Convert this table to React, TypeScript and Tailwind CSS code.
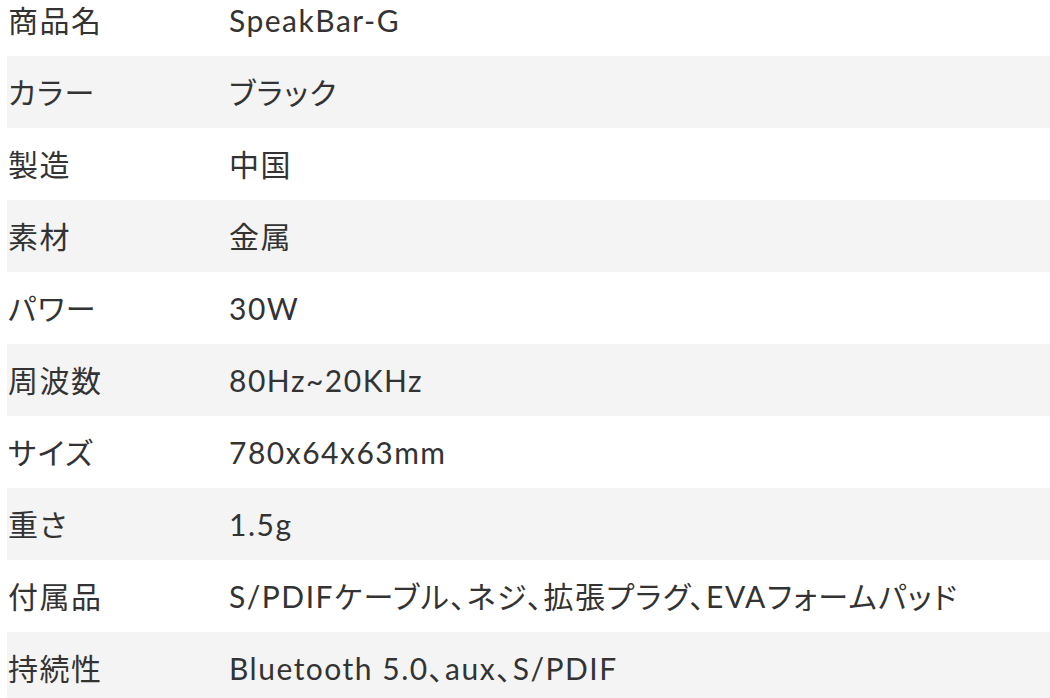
const rows: [string, string[]][] = [
  ["商品名", ["SpeakBar-G"]],
  ["カラー", ["ブラック"]],
  ["製造", ["中国"]],
  ["素材", ["金属"]],
  ["パワー", ["30W"]],
  ["周波数", ["80Hz~20KHz"]],
  ["サイズ", ["780x64x63mm"]],
  ["重さ", ["1.5g"]],
  ["付属品", ["S/PDIFケーブル", "ネジ", "拡張プラグ", "EVAフォームパッド"]],
  ["持続性", ["Bluetooth 5.0", "aux", "S/PDIF"]],
];

export default function App() {
  return (
    <div className="h-[698px] w-[1050px] overflow-hidden bg-white pl-[7px]">
      <table
        className="-mt-[16px] w-[1043px] border-collapse text-[30px] tracking-[0.05em] text-[#333333] [font-feature-settings:'palt']"
        style={{ fontFamily: "Lato, 'Noto Sans CJK JP', sans-serif" }}
      >
        <tbody>
          {rows.map(([label, parts], i) => (
            <tr key={label} className={i % 2 === 1 ? "h-[72px] bg-[#f4f4f4]" : "h-[72px] bg-white"}>
              <td className="w-[222px] p-0 pl-px align-middle font-normal whitespace-nowrap">{label}</td>
              <td className="p-0 align-middle whitespace-nowrap">{parts.join("、")}</td>
            </tr>
          ))}
        </tbody>
      </table>
    </div>
  );
}
